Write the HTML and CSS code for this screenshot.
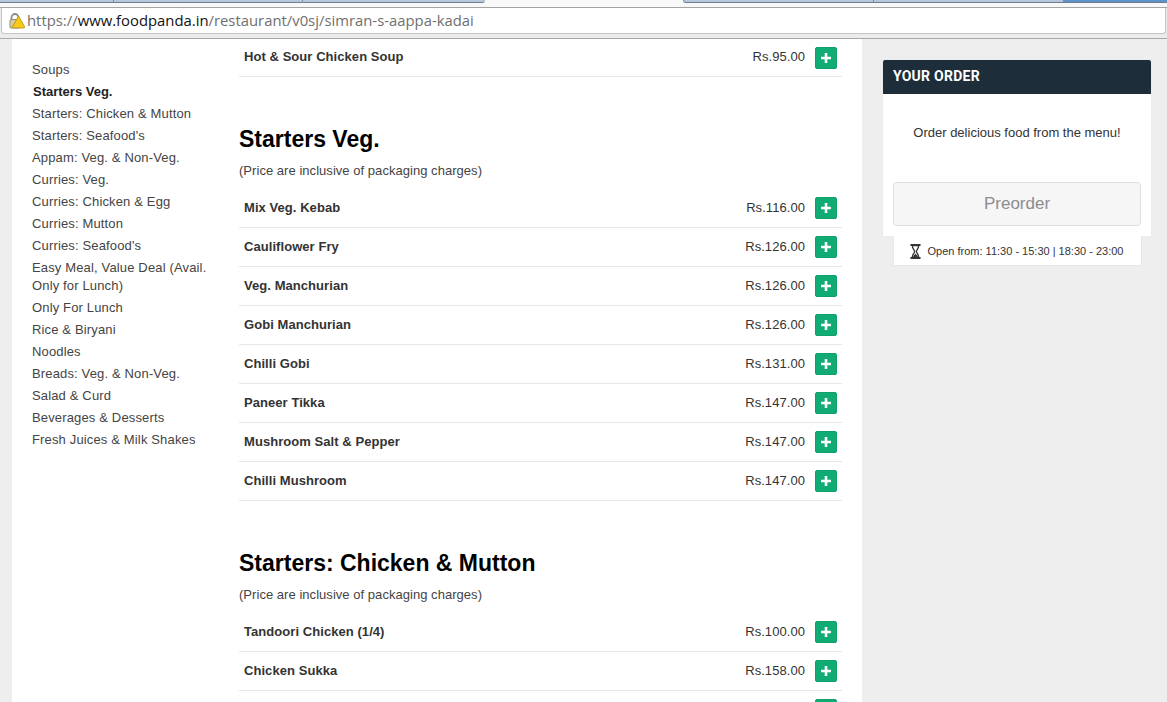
FILE: index.html
```html
<!DOCTYPE html>
<html lang="en">
<head>
<meta charset="utf-8">
<title>Simran's Aappa Kadai</title>
<link rel="stylesheet" href="styles.css">
</head>
<body>
<header class="chrome">
  <div class="tabs">
    <span class="tab tab-a"></span>
    <span class="tab tab-b"></span>
    <span class="tab tab-c"></span>
    <span class="tab tab-d"></span>
    <span class="tab tab-e"></span>
    <span class="tab tab-f"></span>
  </div>
  <div class="omnibox">
    <svg class="lock" width="16" height="16" viewBox="0 0 16 16" aria-hidden="true">
      <path d="M2.500 7V4.500a3.500 3.500 0 0 1 7 0V7" fill="none" stroke="#8d8d80" stroke-width="1.800"/>
      <rect x="1" y="6.500" width="10" height="8.500" rx="1" fill="#d8cf9c" stroke="#8d8d80"/>
      <path d="M9.500 3 15.700 13.800a.7.700 0 0 1-.6 1.100H4a.7.700 0 0 1-.6-1.100z" fill="#f8c916" stroke="#b48a10" stroke-width=".8"/>
    </svg>
    <span class="url"><span class="url-dim">https://</span>www.foodpanda.in<span class="url-dim">/restaurant/v0sj/simran-s-aappa-kadai</span></span>
  </div>
</header>
<div class="page">
  <main class="content">
    <nav class="sidebar">
      <a>Soups</a>
      <a class="active">Starters Veg.</a>
      <a>Starters: Chicken &amp; Mutton</a>
      <a>Starters: Seafood's</a>
      <a>Appam: Veg. &amp; Non-Veg.</a>
      <a>Curries: Veg.</a>
      <a>Curries: Chicken &amp; Egg</a>
      <a>Curries: Mutton</a>
      <a>Curries: Seafood's</a>
      <a>Easy Meal, Value Deal (Avail. Only for Lunch)</a>
      <a>Only For Lunch</a>
      <a>Rice &amp; Biryani</a>
      <a>Noodles</a>
      <a>Breads: Veg. &amp; Non-Veg.</a>
      <a>Salad &amp; Curd</a>
      <a>Beverages &amp; Desserts</a>
      <a>Fresh Juices &amp; Milk Shakes</a>
    </nav>
    <section class="menu">
      <ul class="items">
        <li class="item"><span class="name">Hot &amp; Sour Chicken Soup</span><span class="price">Rs.95.00</span><button class="add"><svg width="10" height="10" viewBox="0 0 10 10" aria-hidden="true"><path d="M5 0v10M0 5h10" stroke="#fff" stroke-width="2.600"/></svg></button></li>
      </ul>
      <h2 class="cat">Starters Veg.</h2>
      <p class="note">(Price are inclusive of packaging charges)</p>
      <ul class="items">
        <li class="item"><span class="name">Mix Veg. Kebab</span><span class="price">Rs.116.00</span><button class="add"><svg width="10" height="10" viewBox="0 0 10 10" aria-hidden="true"><path d="M5 0v10M0 5h10" stroke="#fff" stroke-width="2.600"/></svg></button></li>
        <li class="item"><span class="name">Cauliflower Fry</span><span class="price">Rs.126.00</span><button class="add"><svg width="10" height="10" viewBox="0 0 10 10" aria-hidden="true"><path d="M5 0v10M0 5h10" stroke="#fff" stroke-width="2.600"/></svg></button></li>
        <li class="item"><span class="name">Veg. Manchurian</span><span class="price">Rs.126.00</span><button class="add"><svg width="10" height="10" viewBox="0 0 10 10" aria-hidden="true"><path d="M5 0v10M0 5h10" stroke="#fff" stroke-width="2.600"/></svg></button></li>
        <li class="item"><span class="name">Gobi Manchurian</span><span class="price">Rs.126.00</span><button class="add"><svg width="10" height="10" viewBox="0 0 10 10" aria-hidden="true"><path d="M5 0v10M0 5h10" stroke="#fff" stroke-width="2.600"/></svg></button></li>
        <li class="item"><span class="name">Chilli Gobi</span><span class="price">Rs.131.00</span><button class="add"><svg width="10" height="10" viewBox="0 0 10 10" aria-hidden="true"><path d="M5 0v10M0 5h10" stroke="#fff" stroke-width="2.600"/></svg></button></li>
        <li class="item"><span class="name">Paneer Tikka</span><span class="price">Rs.147.00</span><button class="add"><svg width="10" height="10" viewBox="0 0 10 10" aria-hidden="true"><path d="M5 0v10M0 5h10" stroke="#fff" stroke-width="2.600"/></svg></button></li>
        <li class="item"><span class="name">Mushroom Salt &amp; Pepper</span><span class="price">Rs.147.00</span><button class="add"><svg width="10" height="10" viewBox="0 0 10 10" aria-hidden="true"><path d="M5 0v10M0 5h10" stroke="#fff" stroke-width="2.600"/></svg></button></li>
        <li class="item"><span class="name">Chilli Mushroom</span><span class="price">Rs.147.00</span><button class="add"><svg width="10" height="10" viewBox="0 0 10 10" aria-hidden="true"><path d="M5 0v10M0 5h10" stroke="#fff" stroke-width="2.600"/></svg></button></li>
      </ul>
      <h2 class="cat">Starters: Chicken &amp; Mutton</h2>
      <p class="note">(Price are inclusive of packaging charges)</p>
      <ul class="items">
        <li class="item"><span class="name">Tandoori Chicken (1/4)</span><span class="price">Rs.100.00</span><button class="add"><svg width="10" height="10" viewBox="0 0 10 10" aria-hidden="true"><path d="M5 0v10M0 5h10" stroke="#fff" stroke-width="2.600"/></svg></button></li>
        <li class="item"><span class="name">Chicken Sukka</span><span class="price">Rs.158.00</span><button class="add"><svg width="10" height="10" viewBox="0 0 10 10" aria-hidden="true"><path d="M5 0v10M0 5h10" stroke="#fff" stroke-width="2.600"/></svg></button></li>
        <li class="item"><span class="name"></span><span class="price"></span><button class="add"><svg width="10" height="10" viewBox="0 0 10 10" aria-hidden="true"><path d="M5 0v10M0 5h10" stroke="#fff" stroke-width="2.600"/></svg></button></li>
      </ul>
    </section>
  </main>
  <aside class="order">
    <div class="card">
      <h3 class="card-head">YOUR ORDER</h3>
      <p class="card-msg">Order delicious food from the menu!</p>
      <div class="card-foot"><button class="preorder">Preorder</button></div>
    </div>
    <div class="hours">
      <svg width="11" height="15" viewBox="0 0 10 14" aria-hidden="true">
        <path d="M1 1h8M1 13h8" stroke="#333" stroke-width="1.800" stroke-linecap="round"/>
        <path d="M2 1.500c0 3 2.200 4 2.200 5.500S2 9.500 2 12.500h6c0-3-2.200-4-2.200-5.500S8 4.500 8 1.500z" fill="#fff" stroke="#333" stroke-width="1.200"/>
        <path d="M2.800 12.200c.4-1.800 1.400-2.600 2.200-3.200.8.600 1.800 1.400 2.200 3.200z" fill="#333"/>
      </svg>
      <span>Open from: 11:30 - 15:30 | 18:30 - 23:00</span>
    </div>
  </aside>
</div>
</body>
</html>
```

FILE: styles.css
```css
* { box-sizing: border-box; }
html, body { margin: 0; height: 702px; overflow: hidden; }
body { background: #eee; font-family: "Liberation Sans", Arial, sans-serif; color: #333; }

.chrome { height: 39px; background: #ececec; border-bottom: 1px solid #a8a8a8; }
.tabs { display: flex; height: 8px; background: #f8f8f8; border-bottom: 1px solid #a3a3a3; }
.tab { height: 3px; display: block; border-bottom: 1px solid #6f7d92; }
.tab-a { width: 113px; background: #b9c6d9; }
.tab-b { width: 189px; background: #b9c6d9; border-left: 1px solid #8090a5; }
.tab-c { width: 183px; background: #b9c6d9; border-left: 1px solid #8090a5; border-bottom-right-radius: 4px; }
.tab-d { width: 190px; margin-left: 198px; background: #b9c6d9; border-left: 1px solid #8090a5; border-bottom-left-radius: 4px; }
.tab-e { width: 190px; background: #b9c6d9; border-left: 1px solid #8090a5; }
.tab-f { flex: 1; background: #5b93c9; }
.omnibox { display: flex; align-items: center; gap: 2px; height: 26px; padding-bottom: 1px; background: #fff; border: 1px solid #c4c4c4; border-top: 0; border-radius: 0 0 3px 3px; margin: 0 1px; padding-left: 7px; }
.lock { flex: none; margin-top: 2px; }
.url { font-family: "Open Sans", "Liberation Sans", sans-serif; font-size: 14.850px; color: #111; white-space: nowrap; }
.url-dim { color: #6f6f6f; }

.page { display: flex; align-items: flex-start; padding-left: 12px; }
.content { display: flex; width: 850px; height: 663px; background: #fff; padding-left: 20px; overflow: hidden; }
.sidebar { display: flex; flex-direction: column; flex: none; width: 187px; padding-top: 20px; font-size: 13px; letter-spacing: .15px; line-height: 18px; margin-right: 20px; }
.sidebar a { color: #444; padding: 2px 0; }
.sidebar .active { color: #222; font-weight: bold; letter-spacing: 0; padding-left: 1px; }
.menu { width: 603px; flex: none; }
.items { list-style: none; margin: 0; padding: 0; }
.item { display: flex; align-items: center; height: 39px; padding: 0 5px; border-bottom: 1px solid #e6e8ea; font-size: 13px; letter-spacing: .06px; }
.menu > .items:first-child .item { height: 38px; }
.name { flex: 1; font-weight: bold; color: #333; padding-bottom: 2px; }
.price { color: #333; margin-right: 10px; padding-bottom: 2px; }
.add { display: flex; align-items: center; justify-content: center; width: 22px; height: 22px; padding: 0; background: #10ac74; border: 1px solid #0fa06b; border-radius: 2px; }
.cat { margin: 49px 0 0; font-size: 23px; line-height: 26px; font-weight: bold; color: #000; }
.note { margin: 9px 0 8px; font-size: 13px; letter-spacing: .04px; line-height: 20px; color: #444; }

.order { flex: none; width: 268px; margin: 21px 0 0 21px; }
.card { background: #fff; box-shadow: 0 0 1px #ddd; }
.card-head { margin: 0; height: 34px; padding-left: 10px; background: #1e2d3a; border-radius: 2px 2px 0 0; color: #fff; font-family: Roboto, "Liberation Sans", sans-serif; font-size: 14px; font-weight: 700; letter-spacing: .25px; line-height: 33px; }
.card-msg { margin: 0; padding-top: 31px; text-align: center; font-size: 13px; line-height: 16px; color: #333; height: 88px; }
.card-foot { padding: 0 10px; height: 54px; }
.preorder { display: block; width: 100%; height: 44px; background: #f6f6f6; border: 1px solid #dedede; border-radius: 4px; color: #8c8c8c; font: 17px "Liberation Sans", Arial, sans-serif; }
.hours { display: flex; align-items: center; justify-content: center; gap: 7px; width: 249px; height: 30px; margin-left: 10px; padding: 1px 2px 0 0; background: #fff; border: 1px solid #e8e8e8; border-top: 0; font-size: 11px; color: #333; }
```
